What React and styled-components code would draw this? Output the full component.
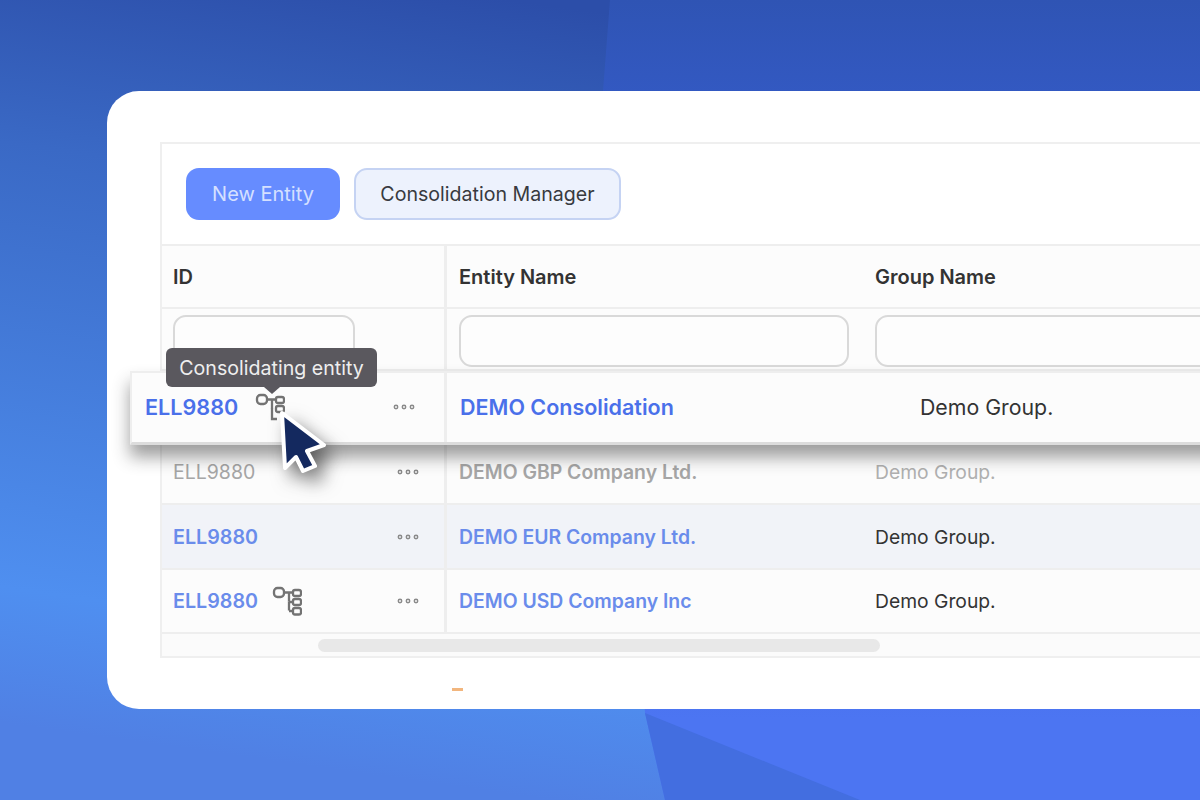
import React from "react";
import styled, { createGlobalStyle, css } from "styled-components";

const GlobalStyle = createGlobalStyle`
  html, body {
    margin: 0;
    padding: 0;
    overflow: hidden;
  }
  body {
    font-family: Inter, "Noto Sans", sans-serif;
    color: #333;
  }
`;

const Stage = styled.div`
  position: relative;
  width: 1200px;
  height: 800px;
  overflow: hidden;
  box-sizing: border-box;
  padding: 91px 0 0 107px;
  background: linear-gradient(180deg, #2f54b4 0%, #3359c2 12%, #3f66d8 50%, #4c75f2 90%);

  &::before {
    content: "";
    position: absolute;
    inset: 0;
    clip-path: polygon(0 0, 610px 0, 603px 91px, 645px 713px, 665px 800px, 0 800px);
    background: linear-gradient(188deg, #2c4ea9 10%, #3a69c5 32%, #4f8ff0 78%, #5080e4 92%);
  }

  &::after {
    content: "";
    position: absolute;
    inset: 0;
    clip-path: polygon(645px 713px, 860px 800px, 665px 800px);
    background: #436ee0;
  }
`;

const Card = styled.div`
  position: relative;
  z-index: 1;
  width: 1200px;
  height: 618px;
  box-sizing: border-box;
  padding: 51px 0 0 53px;
  background: #fff;
  border-radius: 32px;
`;

const Frame = styled.div`
  width: 1150px;
  box-sizing: border-box;
  border: 2px solid #efefef;
  background: #fff;
`;

const Toolbar = styled.div`
  display: flex;
  gap: 14px;
  height: 102px;
  box-sizing: border-box;
  padding: 24px 24px 0;
  border-bottom: 2px solid #eee;
`;

const Button = styled.div`
  display: flex;
  align-items: center;
  justify-content: center;
  box-sizing: border-box;
  height: 52px;
  border-radius: 13px;
  ${(p) =>
    p.$primary
      ? css`
          width: 154px;
          font-size: 20px;
          background: #668cff;
          color: #d5e0ff;
        `
      : css`
          width: 267px;
          font-size: 19.6px;
          background: #edf2fd;
          color: #383a40;
          border: 2px solid #c5d3f3;
        `}
`;

const Row = styled.div`
  display: grid;
  grid-template-columns: 285px 416px 1fr;
  box-sizing: border-box;
  height: ${(p) => p.$height}px;
  background: ${(p) => p.$bg || "#fcfcfc"};
  border-bottom: 2px solid #eee;
`;

const RaisedRow = styled.div`
  position: relative;
  z-index: 2;
  display: grid;
  grid-template-columns: 315px 416px 1fr;
  box-sizing: border-box;
  height: 74px;
  margin-left: -32px;
  background: #fcfcfc;
  border: 2px solid #eee;
  border-bottom: 3px solid #dcdcdc;
  box-shadow: 0 12px 16px rgba(40, 40, 40, 0.45);
`;

const Cell = styled.div`
  display: flex;
  align-items: center;
  box-sizing: border-box;
  padding: 0 12px ${(p) => p.$lift || 0}px;
  min-width: 0;
  ${(p) => p.$divider && "border-right: 3px solid #eee;"}
  ${(p) => p.$inset && `padding-left: ${p.$inset}px;`}
`;

const IdCell = styled(Cell)`
  position: relative;
`;

const HeadText = styled.span`
  font-size: 20px;
  font-weight: 600;
  color: #333;
`;

const Filter = styled.div`
  width: ${(p) => p.$width || "100%"};
  height: 52px;
  flex-shrink: 0;
  margin-top: 4px;
  box-sizing: border-box;
  background: #fdfdfd;
  border: 2px solid #d9d9d9;
  border-radius: 13px;
`;

const IdText = styled.span`
  font-weight: ${(p) => (p.$muted ? 400 : 600)};
  font-size: ${(p) => (p.$big ? 21.6 : p.$muted ? 19.5 : 19.7)}px;
  color: ${(p) => (p.$muted ? "#a6a6a6" : p.$big ? "#4a70ea" : "#6a8ceb")};
`;

const EntityText = styled.span`
  font-weight: 600;
  font-size: ${(p) => (p.$big ? 21.5 : 19.4)}px;
  color: ${(p) => (p.$muted ? "#a6a6a6" : p.$big ? "#4a70ea" : "#6a8ceb")};
`;

const GroupText = styled.span`
  font-size: ${(p) => (p.$big ? 21.3 : 19.3)}px;
  color: ${(p) => (p.$muted ? "#b0b0b0" : "#333")};
`;

const TreeSlot = styled.span`
  display: flex;
  margin-left: ${(p) => p.$gap}px;
  margin-top: ${(p) => p.$drop || 0}px;
`;

const MoreSlot = styled.span`
  display: flex;
  margin-left: auto;
  margin-right: ${(p) => p.$right}px;
`;

const Tooltip = styled.div`
  position: absolute;
  left: 34px;
  top: -25px;
  z-index: 3;
  box-sizing: border-box;
  width: 211px;
  height: 39px;
  display: flex;
  align-items: center;
  justify-content: center;
  border-radius: 6px;
  background: #5a585e;
  color: #eeeeee;
  font-size: 19.6px;
  white-space: nowrap;

  &::after {
    content: "";
    position: absolute;
    left: 98px;
    bottom: -7px;
    border-left: 8px solid transparent;
    border-right: 8px solid transparent;
    border-top: 7px solid #5a585e;
  }
`;

const Pointer = styled.svg`
  position: absolute;
  left: 144px;
  top: 35px;
  z-index: 4;
  filter: drop-shadow(8px 10px 9px rgba(30, 30, 30, 0.6));
`;

const ScrollRow = styled.div`
  display: flex;
  align-items: center;
  height: 22px;
  padding-left: 156px;
  background: #fbfbfb;
`;

const ScrollThumb = styled.div`
  width: 562px;
  height: 13px;
  border-radius: 7px;
  background: #e8e8e8;
`;

const Dash = styled.div`
  width: 11px;
  height: 3px;
  margin: 30px 0 0 292px;
  background: #f2b67e;
`;

const TreeIcon = ({ partial }) => (
  <svg width="30" height="30" viewBox="0 0 30 30" fill="none" stroke="#737373" strokeWidth="2.3">
    <rect x="2" y="2" width="10" height="9" rx="3.5" />
    <path d="M12 6.5h10M17 6.5v9" />
    <rect x="21" y="4" width="8" height="6" rx="2" />
    <rect x="21" y="13" width="8" height="6" rx="2" />
    {partial ? (
      <path d="M17 15v11h5" />
    ) : (
      <>
        <path d="M17 15.5v9M17 16h4M17 25h4" />
        <rect x="21" y="22" width="8" height="6.5" rx="2" />
      </>
    )}
  </svg>
);

const MoreDots = () => (
  <svg width="22" height="6" viewBox="0 0 22 6" fill="none" stroke="#8a8a8a" strokeWidth="1.5">
    <circle cx="3" cy="3" r="1.7" />
    <circle cx="11" cy="3" r="1.7" />
    <circle cx="19" cy="3" r="1.7" />
  </svg>
);

const rows = [
  { muted: true, name: "DEMO GBP Company Ltd.", height: 60, lift: 5 },
  { name: "DEMO EUR Company Ltd.", height: 65, bg: "#f1f3f8" },
  { name: "DEMO USD Company Inc", height: 64, tree: true },
];

export default function App() {
  return (
    <Stage>
      <GlobalStyle />
      <Card>
        <Frame>
          <Toolbar>
            <Button $primary>New Entity</Button>
            <Button>Consolidation Manager</Button>
          </Toolbar>
          <Row $height={63}>
            <Cell $divider $inset={11}>
              <HeadText>ID</HeadText>
            </Cell>
            <Cell>
              <HeadText>Entity Name</HeadText>
            </Cell>
            <Cell>
              <HeadText>Group Name</HeadText>
            </Cell>
          </Row>
          <Row $height={62}>
            <Cell $divider $inset={11}>
              <Filter $width="182px" />
            </Cell>
            <Cell>
              <Filter $width="390px" />
            </Cell>
            <Cell>
              <Filter />
            </Cell>
          </Row>
          <RaisedRow>
            <IdCell $divider $inset={13} $lift={2}>
              <IdText $big>ELL9880</IdText>
              <TreeSlot $gap={17} $drop={2}>
                <TreeIcon partial />
              </TreeSlot>
              <MoreSlot $right={17}>
                <MoreDots />
              </MoreSlot>
              <Tooltip>Consolidating entity</Tooltip>
              <Pointer width="56" height="68" viewBox="0 0 56 68">
                <path
                  d="M6 5 L48 37 L31 43 L39 58 L27 63 L20 49 L9 60 Z"
                  fill="#14295f"
                  stroke="#fff"
                  strokeWidth="4"
                  strokeLinejoin="round"
                />
              </Pointer>
            </IdCell>
            <Cell $inset={13} $lift={2}>
              <EntityText $big>DEMO Consolidation</EntityText>
            </Cell>
            <Cell $inset={57} $lift={2}>
              <GroupText $big>Demo Group.</GroupText>
            </Cell>
          </RaisedRow>
          {rows.map((r) => (
            <Row key={r.name} $height={r.height} $bg={r.bg}>
              <Cell $divider $inset={11} $lift={r.lift}>
                <IdText $muted={r.muted}>ELL9880</IdText>
                {r.tree && (
                  <TreeSlot $gap={14}>
                    <TreeIcon />
                  </TreeSlot>
                )}
                <MoreSlot $right={13}>
                  <MoreDots />
                </MoreSlot>
              </Cell>
              <Cell $lift={r.lift}>
                <EntityText $muted={r.muted}>{r.name}</EntityText>
              </Cell>
              <Cell $lift={r.lift}>
                <GroupText $muted={r.muted}>Demo Group.</GroupText>
              </Cell>
            </Row>
          ))}
          <ScrollRow>
            <ScrollThumb />
          </ScrollRow>
        </Frame>
        <Dash />
      </Card>
    </Stage>
  );
}
